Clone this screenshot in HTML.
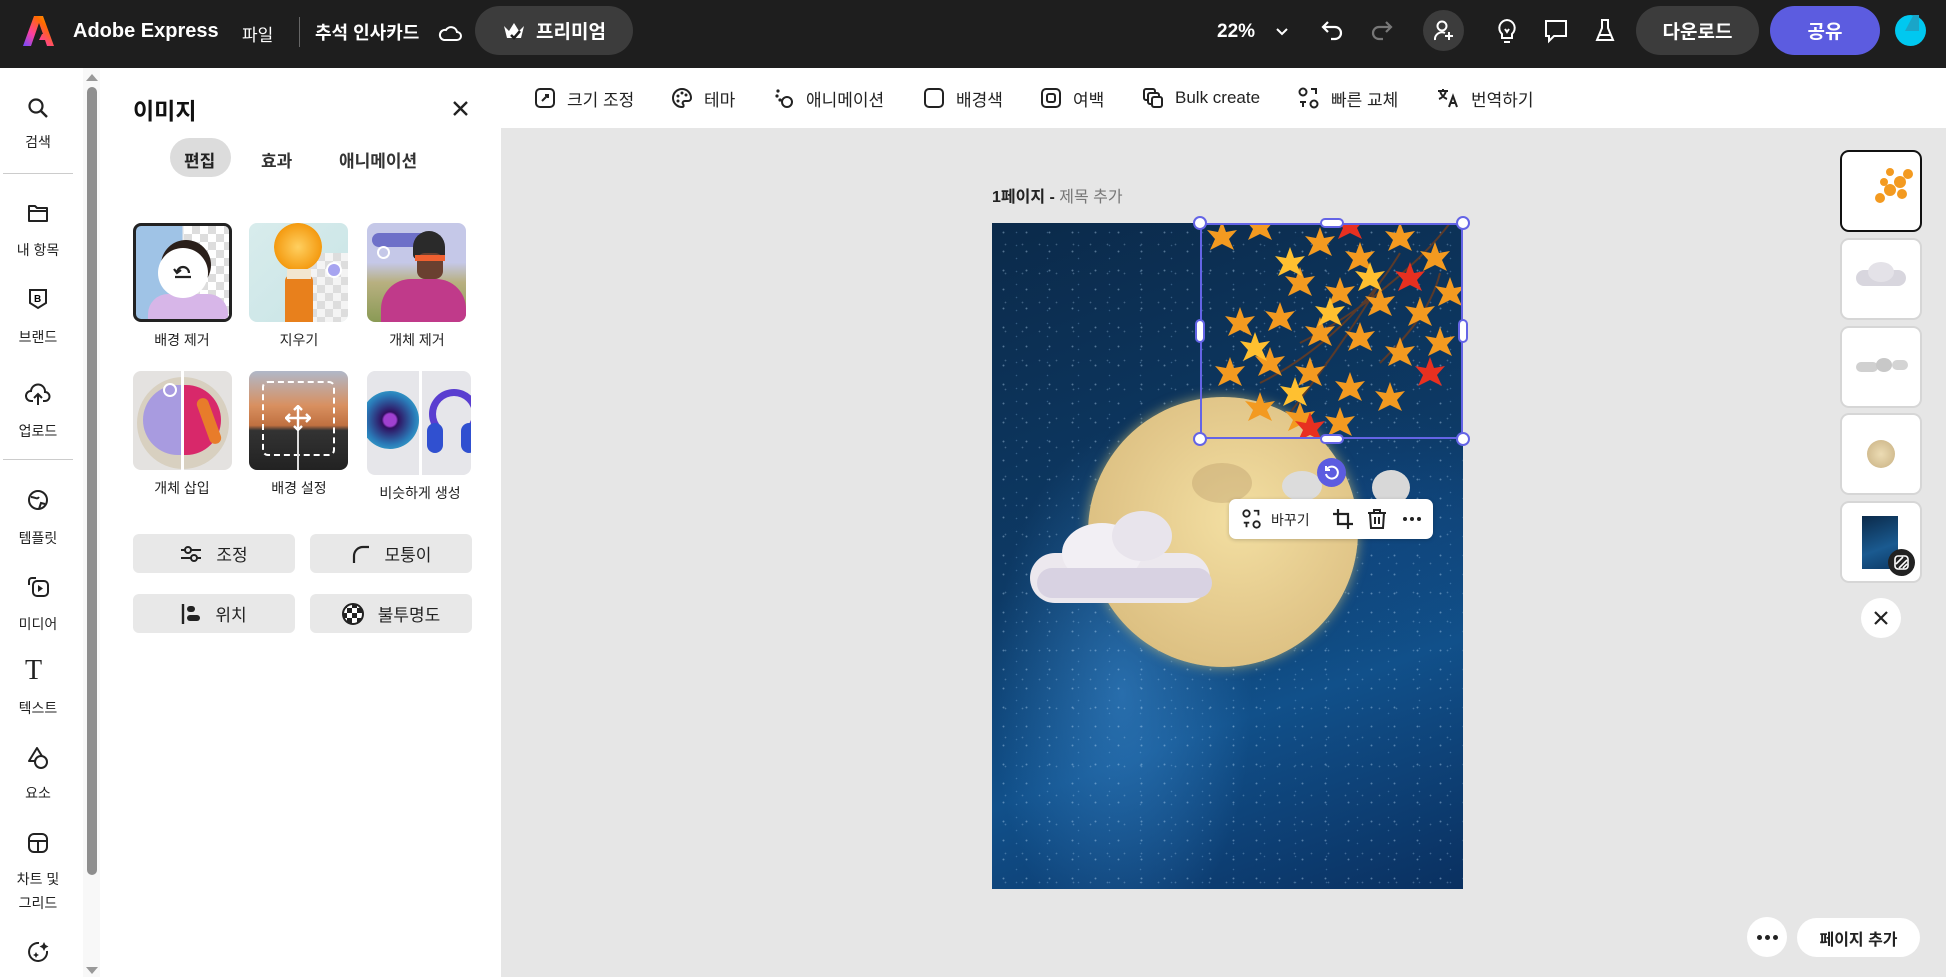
<!DOCTYPE html>
<html style="width:1946px;height:977px;overflow:hidden;background:#e6e6e6"><head><meta charset="utf-8"><style>
*{box-sizing:border-box;margin:0;padding:0}
body{width:1946px;height:977px;overflow:hidden;font-family:"Liberation Sans","Noto Sans CJK KR",sans-serif;background:#e6e6e6;position:relative;color:#222}
.a{position:absolute}
.top{left:0;top:0;width:1946px;height:68px;background:#1e1e1e;color:#fff}
.w{color:#fff;font-size:18px}
.pill{border-radius:26px;display:flex;align-items:center;justify-content:center;font-weight:bold;font-size:19px;color:#fff}
.tb{left:501px;top:68px;width:1445px;height:60px;background:#fff}
.ti{position:absolute;top:0;height:60px;display:flex;align-items:center;font-size:17px;color:#222}
.rail{left:0;top:68px;width:100px;height:909px;background:#fff}
.ri{position:absolute;left:0;width:76px;text-align:center;font-size:14px;color:#222}
.panel{left:100px;top:68px;width:401px;height:909px;background:#fff}
.tile{position:absolute;width:99px;height:99px;border-radius:8px;overflow:hidden}
.lab{position:absolute;width:120px;text-align:center;font-size:14px;color:#222}
.btn{position:absolute;height:39px;border-radius:6px;background:#e8e8e8;display:flex;align-items:center;justify-content:center;font-size:17px;color:#222;gap:14px}
.th{position:absolute;left:1842px;width:78px;height:78px;background:#fff;border-radius:7px;box-shadow:0 0 0 2px #d6d6d6}
svg{display:block}
</style></head><body>

<!-- TOP BAR -->
<div class="a top">
  <svg class="a" style="left:22px;top:15px" width="33" height="32" viewBox="0 0 33 32"><defs><linearGradient id="lg" x1="0" y1="1" x2="1" y2="0"><stop offset="0" stop-color="#6f4bff"/><stop offset=".35" stop-color="#ff3fa0"/><stop offset=".7" stop-color="#ff6a00"/><stop offset="1" stop-color="#ffb400"/></linearGradient></defs><path d="M12 1h9l11 30h-7l-2-6h-6l3-6h1l-4-11-8 23H1z" fill="url(#lg)"/></svg>
  <div class="a w" style="left:73px;top:20px;font-size:20px;font-weight:bold">Adobe Express</div>
  <div class="a w" style="left:242px;top:21px;font-size:17px">파일</div>
  <div class="a" style="left:299px;top:17px;width:1px;height:30px;background:#666"></div>
  <div class="a w" style="left:315px;top:19px;font-size:18px;font-weight:bold">추석 인사카드</div>
  <svg class="a" style="left:438px;top:21px" width="24" height="22" viewBox="0 0 24 22"><path d="M6 19h13a4 4 0 0 0 0-8 6 6 0 0 0-11-2 5 5 0 0 0-2 10z" fill="none" stroke="#fff" stroke-width="2"/></svg>
  <div class="a pill" style="left:475px;top:6px;width:158px;height:49px;background:#3c3c3c;gap:10px"><svg width="24" height="22" viewBox="0 0 24 22"><path d="M2 6l5 5 5-8 5 8 5-5-3 12H5z" fill="#fff"/><path d="M9 15l3 3 6-7" stroke="#1e1e1e" stroke-width="2.5" fill="none"/></svg>프리미엄</div>
  <div class="a w" style="left:1217px;top:21px;font-size:19px;font-weight:bold">22%</div>
  <svg class="a" style="left:1275px;top:25px" width="14" height="14" viewBox="0 0 14 14"><path d="M2 4l5 5 5-5" stroke="#fff" stroke-width="2" fill="none"/></svg>
  <svg class="a" style="left:1320px;top:18px" width="26" height="26" viewBox="0 0 26 26"><path d="M8 4L3 9l5 5M3 9h12a6 6 0 0 1 0 12h-4" stroke="#fff" stroke-width="2.2" fill="none"/></svg>
  <svg class="a" style="left:1368px;top:18px" width="26" height="26" viewBox="0 0 26 26"><path d="M18 4l5 5-5 5M23 9H11a6 6 0 0 0 0 12h4" stroke="#777" stroke-width="2.2" fill="none"/></svg>
  <div class="a" style="left:1423px;top:10px;width:41px;height:41px;border-radius:50%;background:#3c3c3c"></div>
  <svg class="a" style="left:1432px;top:18px" width="24" height="26" viewBox="0 0 24 26"><circle cx="10" cy="8" r="4.5" stroke="#fff" stroke-width="2" fill="none"/><path d="M3 22a7 7 0 0 1 10-7M17 14v8M13 18h8" stroke="#fff" stroke-width="2" fill="none"/></svg>
  <svg class="a" style="left:1495px;top:17px" width="24" height="28" viewBox="0 0 24 28"><path d="M12 3a8 8 0 0 0-5 14v4h10v-4a8 8 0 0 0-5-14zM9 25h6M10 12l2 3 2-3" stroke="#fff" stroke-width="2" fill="none"/></svg>
  <svg class="a" style="left:1543px;top:18px" width="26" height="26" viewBox="0 0 26 26"><path d="M3 3h20v15H11l-5 5v-5H3z" stroke="#fff" stroke-width="2" fill="none"/></svg>
  <svg class="a" style="left:1594px;top:17px" width="22" height="28" viewBox="0 0 22 28"><path d="M7 3h8M8 3v8L3 23h16L14 11V3M5 18h12" stroke="#fff" stroke-width="2" fill="none"/></svg>
  <div class="a pill" style="left:1636px;top:6px;width:123px;height:49px;background:#3c3c3c">다운로드</div>
  <div class="a pill" style="left:1770px;top:6px;width:110px;height:49px;background:#5c5ce0">공유</div>
  <div class="a" style="left:1895px;top:15px;width:31px;height:31px;border-radius:50%;background:#00c8f0"></div>
  <div class="a" style="left:1905px;top:15px;width:14px;height:16px;background:#1aa5c8;clip-path:polygon(60% 0,100% 0,100% 100%,0 100%)"></div>
</div>

<!-- TOOLBAR -->
<div class="a tb">
  <div class="ti" style="left:33px"><svg width="22" height="22" viewBox="0 0 22 22"><rect x="2" y="2" width="18" height="18" rx="4" stroke="#222" stroke-width="2" fill="none"/><path d="M8 14l6-6M11 8h3v3" stroke="#222" stroke-width="2" fill="none"/></svg><span style="margin-left:11px">크기 조정</span></div>
  <div class="ti" style="left:170px"><svg width="22" height="22" viewBox="0 0 22 22"><path d="M11 2a9 9 0 1 0 0 18c2 0 2-2 1-3s0-3 2-3h3a3 3 0 0 0 3-3c0-5-4-9-9-9z" stroke="#222" stroke-width="2" fill="none"/><circle cx="7" cy="9" r="1.5" fill="#222"/><circle cx="11" cy="6" r="1.5" fill="#222"/><circle cx="15" cy="8" r="1.5" fill="#222"/><circle cx="7" cy="14" r="1.5" fill="#222"/></svg><span style="margin-left:11px">테마</span></div>
  <div class="ti" style="left:272px"><svg width="22" height="22" viewBox="0 0 22 22"><circle cx="14" cy="15" r="5" stroke="#222" stroke-width="2" fill="none"/><circle cx="5" cy="4" r="1.6" fill="#222"/><circle cx="4" cy="9" r="1.6" fill="#222"/><circle cx="7" cy="13" r="1.6" fill="#222"/></svg><span style="margin-left:11px">애니메이션</span></div>
  <div class="ti" style="left:422px"><svg width="22" height="22" viewBox="0 0 22 22"><rect x="2" y="2" width="18" height="18" rx="4" stroke="#222" stroke-width="2" fill="none"/></svg><span style="margin-left:11px">배경색</span></div>
  <div class="ti" style="left:539px"><svg width="22" height="22" viewBox="0 0 22 22"><rect x="2" y="2" width="18" height="18" rx="4" stroke="#222" stroke-width="2" fill="none"/><rect x="7" y="7" width="8" height="8" rx="2" stroke="#222" stroke-width="2" fill="none"/></svg><span style="margin-left:11px">여백</span></div>
  <div class="ti" style="left:641px"><svg width="22" height="22" viewBox="0 0 22 22"><rect x="2" y="2" width="11" height="11" rx="2" stroke="#222" stroke-width="2" fill="none"/><rect x="6" y="6" width="11" height="11" rx="2" stroke="#222" stroke-width="2" fill="#fff"/><rect x="10" y="10" width="10" height="10" rx="2" stroke="#222" stroke-width="2" fill="#fff"/></svg><span style="margin-left:11px">Bulk create</span></div>
  <div class="ti" style="left:797px"><svg width="22" height="24" viewBox="0 0 22 24"><circle cx="5" cy="6" r="3.5" stroke="#222" stroke-width="2" fill="none"/><circle cx="16" cy="18" r="3.5" stroke="#222" stroke-width="2" fill="none"/><path d="M13 3h5v5M5 21v-5M2 16h6" stroke="#222" stroke-width="2" fill="none"/></svg><span style="margin-left:11px">빠른 교체</span></div>
  <div class="ti" style="left:935px"><svg width="24" height="24" viewBox="0 0 24 24"><path d="M2 5h10M7 3v2M4 5c1 4 4 7 7 8M10 5c-1 4-4 7-7 8M13 21l4-11 4 11M14.5 17h5" stroke="#222" stroke-width="2" fill="none"/></svg><span style="margin-left:11px">번역하기</span></div>
</div>

<!-- LEFT RAIL -->
<div class="a rail">
  <svg class="a" style="left:27px;top:29px" width="22" height="22" viewBox="0 0 22 22"><circle cx="9" cy="9" r="6.5" stroke="#222" stroke-width="2.2" fill="none"/><path d="M14 14l6 6" stroke="#222" stroke-width="2.4"/></svg>
  <div class="ri" style="top:64px">검색</div>
  <div class="a" style="left:3px;top:105px;width:70px;height:1px;background:#ccc"></div>
  <svg class="a" style="left:26px;top:134px" width="24" height="22" viewBox="0 0 24 22"><path d="M3 4h6l2 2h10v13H3zM3 9h18" stroke="#222" stroke-width="2" fill="none" stroke-linejoin="round"/></svg>
  <div class="ri" style="top:172px">내 항목</div>
  <svg class="a" style="left:27px;top:219px" width="22" height="24" viewBox="0 0 22 24"><path d="M3 3h16v13l-8 5-8-5z" stroke="#222" stroke-width="2" fill="none"/><text x="7" y="15" font-size="10" font-weight="bold" font-family="Liberation Sans">B</text></svg>
  <div class="ri" style="top:259px">브랜드</div>
  <svg class="a" style="left:25px;top:315px" width="26" height="24" viewBox="0 0 26 24"><path d="M8 18H6a5 5 0 0 1 0-10 7 7 0 0 1 14 1 4 4 0 0 1 0 9h-2M13 22v-10M9 15l4-4 4 4" stroke="#222" stroke-width="2" fill="none"/></svg>
  <div class="ri" style="top:353px">업로드</div>
  <div class="a" style="left:3px;top:391px;width:70px;height:1px;background:#ccc"></div>
  <svg class="a" style="left:27px;top:421px" width="22" height="22" viewBox="0 0 22 22"><circle cx="11" cy="11" r="9" stroke="#222" stroke-width="2" fill="none"/><path d="M4 8c4 0 6 3 8 0M12 20l2-6 4 1" stroke="#222" stroke-width="2" fill="none"/></svg>
  <div class="ri" style="top:460px">템플릿</div>
  <svg class="a" style="left:26px;top:506px" width="24" height="24" viewBox="0 0 24 24"><path d="M10 4H6a3 3 0 0 0-3 3v4" stroke="#222" stroke-width="2" fill="none"/><rect x="7" y="7" width="15" height="15" rx="4" stroke="#222" stroke-width="2" fill="none"/><path d="M12 11v7l5-3.5z" fill="#222"/></svg>
  <div class="ri" style="top:546px">미디어</div>
  <div class="a" style="left:25px;top:588px;font-family:'Liberation Serif',serif;font-size:28px;line-height:30px;color:#222">T</div>
  <div class="ri" style="top:630px">텍스트</div>
  <svg class="a" style="left:26px;top:678px" width="24" height="24" viewBox="0 0 24 24"><path d="M11 2L3 15h16z" stroke="#222" stroke-width="2" fill="none" stroke-linejoin="round"/><circle cx="15" cy="16" r="6" stroke="#222" stroke-width="2" fill="#fff"/></svg>
  <div class="ri" style="top:715px">요소</div>
  <svg class="a" style="left:27px;top:764px" width="22" height="22" viewBox="0 0 22 22"><rect x="2" y="2" width="18" height="18" rx="5" stroke="#222" stroke-width="2" fill="none"/><path d="M2 9h18M11 9v11" stroke="#222" stroke-width="2"/></svg>
  <div class="ri" style="top:799px;line-height:24px">차트 및<br>그리드</div>
  <svg class="a" style="left:26px;top:872px" width="24" height="24" viewBox="0 0 24 24"><path d="M13 3a9 9 0 1 0 8 8" stroke="#222" stroke-width="2" fill="none"/><path d="M18 2l1.5 3 3 1.5-3 1.5L18 11l-1.5-3-3-1.5 3-1.5zM10 12l1 2 2 1-2 1-1 2-1-2-2-1 2-1z" fill="#222"/></svg>
  <div class="a" style="left:83px;top:0;width:17px;height:909px;background:#f8f8f8"></div>
  <div class="a" style="left:87px;top:19px;width:10px;height:788px;border-radius:5px;background:#8e8e8e"></div>
  <div class="a" style="left:86px;top:6px;width:0;height:0;border-left:6px solid transparent;border-right:6px solid transparent;border-bottom:7px solid #999"></div>
  <div class="a" style="left:86px;top:899px;width:0;height:0;border-left:6px solid transparent;border-right:6px solid transparent;border-top:7px solid #999"></div>
</div>

<!-- PANEL -->
<div class="a panel">
  <div class="a" style="left:33px;top:24px;font-size:23px;font-weight:bold;color:#111">이미지</div>
  <svg class="a" style="left:352px;top:32px" width="17" height="17" viewBox="0 0 17 17"><path d="M2 2l13 13M15 2L2 15" stroke="#222" stroke-width="2.4"/></svg>
  <div class="a" style="left:70px;top:70px;width:61px;height:39px;border-radius:20px;background:#dcdcdc"></div>
  <div class="a" style="left:84px;top:79px;font-size:17px;font-weight:bold">편집</div>
  <div class="a" style="left:161px;top:79px;font-size:17px;font-weight:bold;color:#333">효과</div>
  <div class="a" style="left:239px;top:79px;font-size:17px;font-weight:bold;color:#333">애니메이션</div>

  <div class="tile" style="left:33px;top:155px;border:3px solid #222;background:linear-gradient(90deg,#9fc3e6 50%,#eee 50%)">
    <div class="a" style="left:48px;top:0;width:50px;height:99px;background:repeating-conic-gradient(#ddd 0 25%,#fff 0 50%) 0 0/16px 16px"></div>
    <div class="a" style="left:25px;top:14px;width:50px;height:50px;border-radius:50%;background:#2a1f1a"></div>
    <div class="a" style="left:12px;top:68px;width:80px;height:40px;border-radius:20px 20px 0 0;background:#d7b6e8"></div>
    <div class="a" style="left:22px;top:22px;width:50px;height:50px;border-radius:50%;background:#fff"></div>
    <svg class="a" style="left:33px;top:35px" width="28" height="24" viewBox="0 0 28 24"><path d="M6 16h16M8 12a6 6 0 1 1 12 0M5 8l3 4 4-3" stroke="#222" stroke-width="2.2" fill="none"/></svg>
  </div>
  <div class="tile" style="left:149px;top:155px;background:linear-gradient(135deg,#d8ecec,#c8e4e6)">
    <div class="a" style="left:60px;top:30px;width:40px;height:70px;background:repeating-conic-gradient(#ddd 0 25%,#f4f4f4 0 50%) 0 0/16px 16px"></div>
    <div class="a" style="left:25px;top:0;width:48px;height:48px;border-radius:50%;background:radial-gradient(#ffd060,#f49a10 70%,#fbe6a0 72%)"></div>
    <div class="a" style="left:36px;top:52px;width:28px;height:47px;border-radius:6px 6px 0 0;background:#e8801c"></div>
    <div class="a" style="left:38px;top:46px;width:24px;height:10px;background:#f2e6d0"></div>
    <div class="a" style="left:77px;top:39px;width:16px;height:16px;border-radius:50%;background:#a7a4f0;border:2px solid #fff"></div>
  </div>
  <div class="tile" style="left:267px;top:155px;background:linear-gradient(#c5c8e8 40%,#b8b080 60%,#8a9a55)">
    <div class="a" style="left:5px;top:10px;width:60px;height:14px;background:#6e70c8;border-radius:7px"></div>
    <div class="a" style="left:10px;top:23px;width:13px;height:13px;border-radius:50%;border:2px solid #fff"></div>
    <div class="a" style="left:46px;top:8px;width:32px;height:28px;border-radius:16px 16px 4px 4px;background:#2a2a2a"></div>
    <div class="a" style="left:50px;top:30px;width:26px;height:26px;border-radius:8px;background:#6a4030"></div>
    <div class="a" style="left:48px;top:32px;width:30px;height:6px;background:#f06030"></div>
    <div class="a" style="left:14px;top:56px;width:85px;height:50px;border-radius:30px 30px 0 0;background:#c03a8a"></div>
  </div>
  <div class="lab" style="left:22px;top:262px">배경 제거</div>
  <div class="lab" style="left:139px;top:262px">지우기</div>
  <div class="lab" style="left:257px;top:262px">개체 제거</div>

  <div class="tile" style="left:33px;top:303px;background:#e4e2e0">
    <div class="a" style="left:4px;top:6px;width:92px;height:92px;border-radius:50%;background:#d8d0c0"></div>
    <div class="a" style="left:10px;top:14px;width:40px;height:70px;border-radius:35px 0 0 35px;background:#a89be0"></div>
    <div class="a" style="left:50px;top:14px;width:38px;height:70px;border-radius:0 35px 35px 0;background:#d8286a"></div>
    <div class="a" style="left:70px;top:26px;width:12px;height:48px;border-radius:6px;background:#e87c2a;transform:rotate(-20deg)"></div>
    <div class="a" style="left:48px;top:0;width:3px;height:99px;background:#fff"></div>
    <div class="a" style="left:30px;top:12px;width:14px;height:14px;border-radius:50%;border:2px solid #fff;background:#a89be0"></div>
  </div>
  <div class="tile" style="left:149px;top:303px;background:linear-gradient(#b0b8c8,#d89060 35%,#c07040 55%,#333 60%,#222)">
    <div class="a" style="left:13px;top:10px;width:73px;height:75px;border:2px dashed #fff;border-radius:6px"></div>
    <div class="a" style="left:48px;top:55px;width:2px;height:44px;background:#ddd"></div>
    <svg class="a" style="left:36px;top:34px" width="26" height="26" viewBox="0 0 26 26"><path d="M13 1v24M1 13h24M9 5l4-4 4 4M9 21l4 4 4-4M5 9l-4 4 4 4M21 9l4 4-4 4" stroke="#fff" stroke-width="2.4" fill="none"/></svg>
  </div>
  <div class="tile" style="left:267px;top:303px;width:104px;height:104px;background:#e6e6ea">
    <div class="a" style="left:-6px;top:20px;width:58px;height:58px;border-radius:50%;background:radial-gradient(#a040d0 15%,#301060 20%,#2a7ab8 60%,#40d0e0)"></div>
    <div class="a" style="left:52px;top:0;width:3px;height:104px;background:#fff"></div>
    <div class="a" style="left:62px;top:18px;width:50px;height:50px;border-radius:50%;border:7px solid #5a3ed0;border-bottom-color:transparent"></div>
    <div class="a" style="left:60px;top:52px;width:16px;height:30px;border-radius:8px;background:#3050d0"></div>
    <div class="a" style="left:94px;top:52px;width:16px;height:30px;border-radius:8px;background:#3050d0"></div>
  </div>
  <div class="lab" style="left:22px;top:410px">개체 삽입</div>
  <div class="lab" style="left:139px;top:410px">배경 설정</div>
  <div class="lab" style="left:260px;top:415px">비슷하게 생성</div>

  <div class="btn" style="left:33px;top:466px;width:162px"><svg width="22" height="18" viewBox="0 0 22 18"><path d="M1 5h20M1 13h20" stroke="#222" stroke-width="2"/><circle cx="8" cy="5" r="3" fill="#e8e8e8" stroke="#222" stroke-width="2"/><circle cx="14" cy="13" r="3" fill="#e8e8e8" stroke="#222" stroke-width="2"/></svg>조정</div>
  <div class="btn" style="left:210px;top:466px;width:162px"><svg width="20" height="20" viewBox="0 0 20 20"><path d="M3 19V12A9 9 0 0 1 12 3h6" stroke="#222" stroke-width="2.2" fill="none"/></svg>모퉁이</div>
  <div class="btn" style="left:33px;top:526px;width:162px"><svg width="20" height="22" viewBox="0 0 20 22"><path d="M2 1v20" stroke="#222" stroke-width="2.4"/><rect x="6" y="3" width="8" height="6" rx="3" fill="#222"/><rect x="6" y="12" width="13" height="6" rx="3" fill="#222"/></svg>위치</div>
  <div class="btn" style="left:210px;top:526px;width:162px"><svg width="22" height="22" viewBox="0 0 22 22"><defs><clipPath id="cc"><circle cx="11" cy="11" r="10"/></clipPath></defs><g clip-path="url(#cc)"><rect width="22" height="22" fill="#fff"/><path d="M0 0h5v5H0zM10 0h5v5h-5zM5 5h5v5H5zM15 5h5v5h-5zM0 10h5v5H0zM10 10h5v5h-5zM5 15h5v5H5zM15 15h5v5h-5z" fill="#222"/></g><circle cx="11" cy="11" r="10" stroke="#222" stroke-width="2" fill="none"/></svg>불투명도</div>
</div>

<!-- CANVAS -->
<div class="a" style="left:992px;top:183px;font-size:16px;color:#222"><b>1페이지 -</b> <span style="color:#777">제목 추가</span></div>
<div class="a" style="left:992px;top:223px;width:471px;height:666px;overflow:hidden;background:
 radial-gradient(ellipse 130px 260px at 130px 470px,rgba(60,140,210,.55),transparent),
 radial-gradient(ellipse 200px 120px at 360px 300px,rgba(20,80,150,.4),transparent),
 linear-gradient(160deg,#0b2a4a,#0d3a66 45%,#11508a 70%,#0a3060)">
  <div class="a" style="inset:0;opacity:.55;background:
   radial-gradient(circle,rgba(200,230,255,.7) 0.7px,transparent 1.2px) 0 0/23px 19px,
   radial-gradient(circle,rgba(200,230,255,.5) 0.6px,transparent 1.1px) 5px 7px/17px 29px,
   radial-gradient(circle,rgba(160,210,255,.5) 0.5px,transparent 1px) 9px 3px/31px 13px"></div>
  <div class="a" style="left:96px;top:174px;width:270px;height:270px;border-radius:50%;background:radial-gradient(circle at 55% 45%,#f3dfa2,#e2c78a 55%,#d4b676);box-shadow:0 0 12px rgba(230,210,120,.6)"></div>
  <div class="a" style="left:200px;top:240px;width:60px;height:40px;border-radius:50%;background:rgba(180,150,100,.35)"></div>
  <div class="a" style="left:145px;top:330px;width:70px;height:50px;border-radius:50%;background:rgba(180,150,100,.3)"></div>
  <div class="a" style="left:38px;top:330px;width:180px;height:50px;border-radius:25px;background:#ece8ee"></div>
  <div class="a" style="left:70px;top:300px;width:80px;height:60px;border-radius:50%;background:#f2eff4"></div>
  <div class="a" style="left:120px;top:288px;width:60px;height:50px;border-radius:50%;background:#e8e4ec"></div>
  <div class="a" style="left:45px;top:345px;width:175px;height:30px;border-radius:15px;background:#d8d2e2"></div>
  <div class="a" style="left:290px;top:248px;width:40px;height:30px;border-radius:50%;background:#dcdcdc"></div>
  <div class="a" style="left:380px;top:247px;width:38px;height:35px;border-radius:50%;background:#d8d8d8"></div>
  <svg class="a" style="left:208px;top:0" width="263" height="216" viewBox="0 0 263 216">
    <defs><polygon id="lf" points="0,-16 4,-5 15,-7 7,2 12,13 0,7 -12,13 -7,2 -15,-7 -4,-5"/></defs>
    <path d="M250 0C220 40 160 90 100 120M200 30C170 80 120 130 60 160M180 60C150 110 120 150 90 190M240 50C230 90 200 120 180 140" stroke="#5a3a2a" stroke-width="2" fill="none"/>
    <g fill="#f39a20">
      <use href="#lf" x="22" y="14"/><use href="#lf" x="60" y="4"/><use href="#lf" x="120" y="20"/><use href="#lf" x="160" y="35"/><use href="#lf" x="200" y="15"/><use href="#lf" x="235" y="35"/>
      <use href="#lf" x="100" y="60"/><use href="#lf" x="140" y="70"/><use href="#lf" x="180" y="80"/><use href="#lf" x="220" y="90"/><use href="#lf" x="250" y="70"/>
      <use href="#lf" x="40" y="100"/><use href="#lf" x="80" y="95"/><use href="#lf" x="120" y="110"/><use href="#lf" x="160" y="115"/><use href="#lf" x="200" y="130"/><use href="#lf" x="240" y="120"/>
      <use href="#lf" x="30" y="150"/><use href="#lf" x="70" y="140"/><use href="#lf" x="110" y="150"/><use href="#lf" x="150" y="165"/><use href="#lf" x="190" y="175"/>
      <use href="#lf" x="60" y="185"/><use href="#lf" x="100" y="195"/><use href="#lf" x="140" y="200"/>
    </g>
    <g fill="#ffc030"><use href="#lf" x="90" y="40"/><use href="#lf" x="130" y="90"/><use href="#lf" x="55" y="125"/><use href="#lf" x="170" y="55"/><use href="#lf" x="95" y="170"/></g>
    <g fill="#e83020"><use href="#lf" x="150" y="3"/><use href="#lf" x="110" y="205"/><use href="#lf" x="230" y="150"/><use href="#lf" x="210" y="55"/></g>
  </svg>
</div>

<div class="a" style="left:1200px;top:223px;width:263px;height:216px;border:2px solid #6464e6"></div>
<div class="a" style="left:1193px;top:216px;width:14px;height:14px;border-radius:50%;background:#fff;border:2px solid #6464e6"></div>
<div class="a" style="left:1456px;top:216px;width:14px;height:14px;border-radius:50%;background:#fff;border:2px solid #6464e6"></div>
<div class="a" style="left:1193px;top:432px;width:14px;height:14px;border-radius:50%;background:#fff;border:2px solid #6464e6"></div>
<div class="a" style="left:1456px;top:432px;width:14px;height:14px;border-radius:50%;background:#fff;border:2px solid #6464e6"></div>
<div class="a" style="left:1320px;top:218px;width:24px;height:10px;border-radius:5px;background:#fff;border:2px solid #6464e6"></div>
<div class="a" style="left:1320px;top:434px;width:24px;height:10px;border-radius:5px;background:#fff;border:2px solid #6464e6"></div>
<div class="a" style="left:1195px;top:319px;width:10px;height:24px;border-radius:5px;background:#fff;border:2px solid #6464e6"></div>
<div class="a" style="left:1458px;top:319px;width:10px;height:24px;border-radius:5px;background:#fff;border:2px solid #6464e6"></div>
<div class="a" style="left:1317px;top:458px;width:29px;height:29px;border-radius:50%;background:#5c5ce0"></div>
<svg class="a" style="left:1323px;top:464px" width="17" height="17" viewBox="0 0 17 17"><path d="M4 5a6 6 0 1 1-1 5M3 2v4h4" stroke="#fff" stroke-width="2" fill="none"/></svg>

<div class="a" style="left:1229px;top:499px;width:204px;height:40px;border-radius:7px;background:#fff;box-shadow:0 1px 4px rgba(0,0,0,.2)"></div>
<svg class="a" style="left:1241px;top:508px" width="22" height="22" viewBox="0 0 22 24"><circle cx="5" cy="6" r="3.5" stroke="#222" stroke-width="2" fill="none"/><circle cx="16" cy="18" r="3.5" stroke="#222" stroke-width="2" fill="none"/><path d="M13 3h5v5M5 21v-5M2 16h6" stroke="#222" stroke-width="2" fill="none"/></svg>
<div class="a" style="left:1271px;top:510px;font-size:14px;color:#222">바꾸기</div>
<svg class="a" style="left:1332px;top:508px" width="22" height="22" viewBox="0 0 22 22"><path d="M6 1v15h15M1 6h15v15" stroke="#222" stroke-width="2.2" fill="none"/></svg>
<svg class="a" style="left:1367px;top:508px" width="20" height="22" viewBox="0 0 20 22"><path d="M1 5h18M7 5V2h6v3M3 5l1 15h12l1-15M8 9v7M12 9v7" stroke="#222" stroke-width="2" fill="none"/></svg>
<div class="a" style="left:1403px;top:517px;width:4px;height:4px;border-radius:50%;background:#222;box-shadow:7px 0 #222,14px 0 #222"></div>

<div class="th" style="top:152px;box-shadow:0 0 0 2px #111"><svg class="a" style="left:28px;top:16px" width="44" height="40" viewBox="0 0 44 40"><g fill="#f39a20"><circle cx="10" cy="30" r="5"/><circle cx="20" cy="22" r="6"/><circle cx="30" cy="14" r="6"/><circle cx="38" cy="6" r="5"/><circle cx="32" cy="26" r="5"/><circle cx="20" cy="4" r="4"/><circle cx="14" cy="14" r="4"/></g></svg></div>
<div class="th" style="top:240px"><div class="a" style="left:14px;top:30px;width:50px;height:16px;border-radius:8px;background:#d8d6de"></div><div class="a" style="left:26px;top:22px;width:26px;height:20px;border-radius:50%;background:#e4e2e8"></div></div>
<div class="th" style="top:328px"><div class="a" style="left:14px;top:34px;width:22px;height:10px;border-radius:5px;background:#d0d0d0"></div><div class="a" style="left:34px;top:30px;width:16px;height:14px;border-radius:50%;background:#c8c8c8"></div><div class="a" style="left:50px;top:32px;width:16px;height:10px;border-radius:5px;background:#d4d4d4"></div></div>
<div class="th" style="top:415px"><div class="a" style="left:25px;top:25px;width:28px;height:28px;border-radius:50%;background:radial-gradient(#ecdcb4,#c8b082)"></div></div>
<div class="th" style="top:503px"><div class="a" style="left:20px;top:13px;width:36px;height:53px;background:linear-gradient(160deg,#0b2a4a,#1a5a90 60%,#0d3a66)"></div><div class="a" style="left:46px;top:46px;width:27px;height:27px;border-radius:50%;background:#222"></div><svg class="a" style="left:52px;top:52px" width="15" height="15" viewBox="0 0 15 15"><rect x="1" y="1" width="13" height="13" rx="3" stroke="#fff" stroke-width="1.6" fill="none"/><path d="M2 9l7-7M5 13l8-8M9 13l4-4" stroke="#fff" stroke-width="1.6"/></svg></div>
<div class="a" style="left:1861px;top:598px;width:40px;height:40px;border-radius:50%;background:#fff"></div>
<svg class="a" style="left:1874px;top:611px" width="14" height="14" viewBox="0 0 14 14"><path d="M1 1l12 12M13 1L1 13" stroke="#222" stroke-width="2.2"/></svg>

<div class="a" style="left:1747px;top:917px;width:40px;height:40px;border-radius:50%;background:#fff"></div>
<div class="a" style="left:1757px;top:935px;width:5px;height:5px;border-radius:50%;background:#222;box-shadow:8px 0 #222,16px 0 #222"></div>
<div class="a" style="left:1797px;top:918px;width:123px;height:39px;border-radius:20px;background:#fff;display:flex;align-items:center;justify-content:center;font-size:16px;font-weight:bold;color:#222">페이지 추가</div>
</body></html>
